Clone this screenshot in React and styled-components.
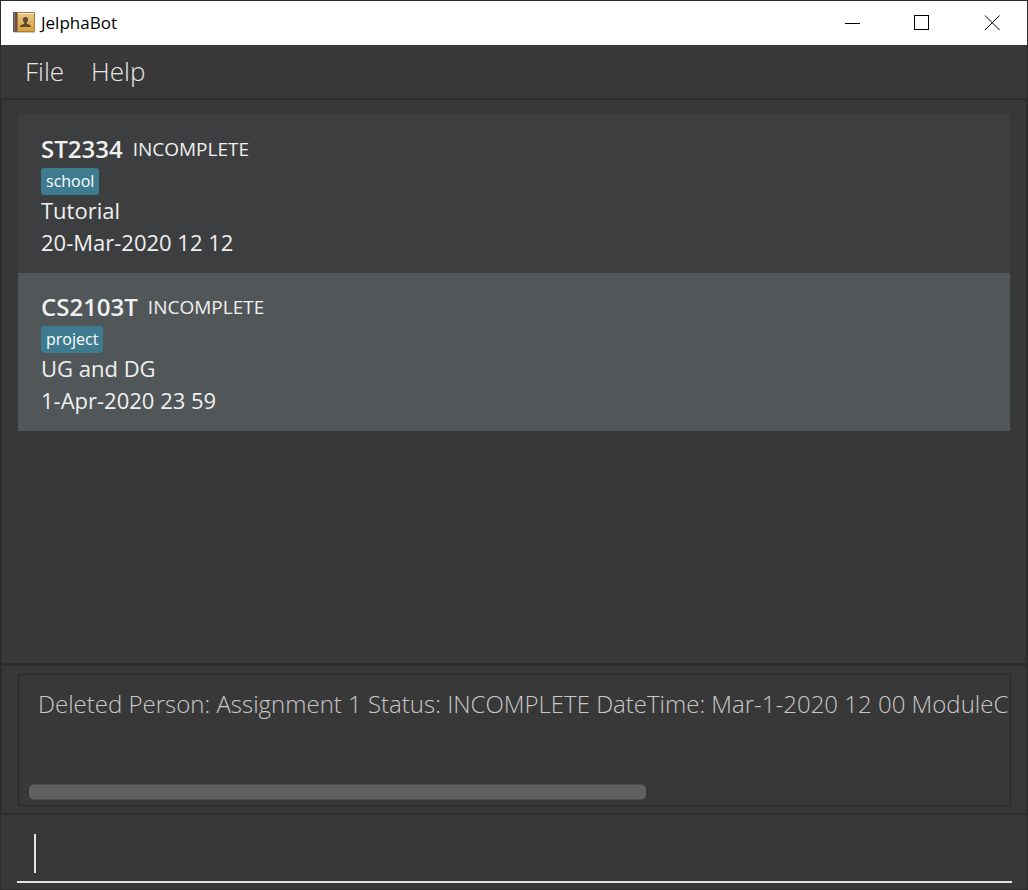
import React from "react";
import styled, { createGlobalStyle } from "styled-components";

const GlobalStyle = createGlobalStyle`
  *, *::before, *::after { box-sizing: border-box; }
  body { margin: 0; background: #383838; }
`;

const Window = styled.div`
  display: flex;
  flex-direction: column;
  min-height: 100vh;
  border: 1px solid #2b2b2b;
  background: #383838;
  color: #f0f0f0;
  font-family: "Open Sans", "Noto Sans", sans-serif;
`;

const TitleBar = styled.header`
  display: flex;
  align-items: center;
  height: 44px;
  padding-left: 12px;
  background: #ffffff;
  color: #000000;
`;

const AppTitle = styled.h1`
  flex: 1;
  margin: 0 0 0 6px;
  font-size: 17px;
  line-height: 24px;
  font-weight: 400;
`;

const WindowButton = styled.button`
  display: flex;
  align-items: center;
  justify-content: center;
  width: 70px;
  height: 44px;
  padding: 0;
  border: 0;
  background: transparent;
  color: #000000;
`;

const MenuBar = styled.nav`
  display: flex;
  align-items: flex-start;
  gap: 27px;
  height: 55px;
  padding: 0 24px;
  border-bottom: 2px solid #2d2d2d;
`;

const MenuButton = styled.button`
  padding: 0;
  border: 0;
  background: transparent;
  color: #e8e8e8;
  font-family: inherit;
  font-size: 26px;
  font-weight: 300;
  line-height: 52px;
`;

const ListPane = styled.main`
  flex: 1;
  padding: 15px 16px;
  border: solid #2d2d2d;
  border-width: 0 1px 3px;
`;

const TaskList = styled.ul`
  margin: 0;
  padding: 0;
  list-style: none;
`;

const TaskCard = styled.li`
  height: 158px;
  padding: 18px 23px;
  background: ${(p) => (p.$selected ? "#515658" : "#3c3e3f")};
`;

const TaskHeading = styled.div`
  display: flex;
  align-items: flex-start;
  gap: 10px;
  height: 35px;
  line-height: 32px;
`;

const ModuleCode = styled.h2`
  margin: 0;
  font-size: 24px;
  font-weight: 600;
`;

const Status = styled.span`
  font-size: 19px;
`;

const TagRow = styled.div`
  display: flex;
  align-items: flex-start;
  height: 26px;
`;

const Tag = styled.span`
  padding: 0 5px;
  border-radius: 3px;
  background: #3e7b91;
  color: #ffffff;
  font-size: 16px;
  font-weight: 500;
  line-height: 27px;
`;

const Detail = styled.p`
  margin: 0;
  font-size: 22px;
  line-height: 32px;
`;

const ResultPane = styled.section`
  padding: 8px 15px 7px 16px;
  border: solid #2f2f2f;
  border-width: 0 1px 2px;
`;

const ResultBox = styled.div`
  display: flex;
  flex-direction: column;
  justify-content: space-between;
  height: 132px;
  padding: 11px 2px 5px 10px;
  border: 1px solid #292929;
`;

const ResultText = styled.output`
  overflow: hidden;
  padding-left: 9px;
  color: #c8c8c8;
  font-size: 24px;
  font-weight: 300;
  line-height: 36px;
  white-space: nowrap;
`;

const ScrollThumb = styled.div`
  width: 63%;
  height: 16px;
  border: solid #4c4c4c;
  border-width: 1px 0;
  border-radius: 5px;
  background: #606060;
`;

const CommandPane = styled.footer`
  padding: 19px 15px 6px 16px;
`;

const CommandRow = styled.div`
  display: flex;
  height: 49px;
  padding-left: 17px;
  border-bottom: 2px solid #e4e4e4;
`;

const Caret = styled.span`
  width: 2px;
  height: 39px;
  background: #e4e4e4;
`;

const CommandInput = styled.input`
  flex: 1;
  min-width: 0;
  height: 39px;
  padding: 0;
  border: 0;
  outline: 0;
  background: transparent;
  color: #ffffff;
  caret-color: transparent;
  font-family: inherit;
  font-size: 24px;
  font-weight: 300;
`;

const AddressBookIcon = () => (
  <svg width="22" height="22" viewBox="0 0 22 22" aria-hidden="true">
    <defs>
      <linearGradient id="cover" x1="0" y1="0" x2="0" y2="1">
        <stop offset="0" stopColor="#e6c384" />
        <stop offset="1" stopColor="#d9a03f" />
      </linearGradient>
    </defs>
    <rect x="1" y="20" width="21" height="1" fill="#c9c9c9" />
    <rect x="0" y="0" width="22" height="20" rx="1" fill="#a87a3c" />
    <rect x="5" y="1" width="16" height="1" fill="#f7ead0" />
    <rect x="5" y="2" width="16" height="17" fill="url(#cover)" />
    <rect x="0" y="0" width="4" height="20" rx="1" fill="#62504a" />
    <rect x="1" y="1" width="1" height="18" fill="#8a7770" />
    <path
      d="M12.500 5c-1.800 0-2.700 1.200-2.600 2.800.1 1.300.6 2 1.300 2.700v1.300c-1.200.6-4.200.9-4.200 3.200h11c0-2.300-3-2.600-4.200-3.200v-1.300c.7-.7 1.200-1.400 1.300-2.700C15.200 6.200 14.300 5 12.500 5z"
      fill="#5d4a2c"
    />
  </svg>
);

const WindowGlyph = ({ children }) => (
  <svg
    width="16"
    height="16"
    viewBox="0 0 16 16"
    fill="none"
    stroke="currentColor"
    strokeWidth="1"
    aria-hidden="true"
  >
    {children}
  </svg>
);

const tasks = [
  { code: "ST2334", tag: "school", name: "Tutorial", due: "20-Mar-2020 12 12" },
  { code: "CS2103T", tag: "project", name: "UG and DG", due: "1-Apr-2020 23 59", selected: true },
];

export default function App() {
  return (
    <>
      <GlobalStyle />
      <Window>
        <TitleBar>
          <AddressBookIcon />
          <AppTitle>JelphaBot</AppTitle>
          <WindowButton type="button" aria-label="Minimize">
            <WindowGlyph>
              <path d="M1 8.500h15" />
            </WindowGlyph>
          </WindowButton>
          <WindowButton type="button" aria-label="Maximize">
            <WindowGlyph>
              <rect x="0.5" y="0.5" width="14" height="14" />
            </WindowGlyph>
          </WindowButton>
          <WindowButton type="button" aria-label="Close">
            <WindowGlyph>
              <path d="M1 0.500l14.500 14.500M15.500 0.500l-14.500 14.500" />
            </WindowGlyph>
          </WindowButton>
        </TitleBar>
        <MenuBar>
          <MenuButton type="button">File</MenuButton>
          <MenuButton type="button">Help</MenuButton>
        </MenuBar>
        <ListPane>
          <TaskList>
            {tasks.map((task) => (
              <TaskCard key={task.code} $selected={task.selected}>
                <TaskHeading>
                  <ModuleCode>{task.code}</ModuleCode>
                  <Status>INCOMPLETE</Status>
                </TaskHeading>
                <TagRow>
                  <Tag>{task.tag}</Tag>
                </TagRow>
                <Detail>{task.name}</Detail>
                <Detail>{task.due}</Detail>
              </TaskCard>
            ))}
          </TaskList>
        </ListPane>
        <ResultPane>
          <ResultBox>
            <ResultText>
              Deleted Person: Assignment 1 Status: INCOMPLETE DateTime: Mar-1-2020 12 00 ModuleC
            </ResultText>
            <ScrollThumb />
          </ResultBox>
        </ResultPane>
        <CommandPane>
          <CommandRow>
            <Caret />
            <CommandInput type="text" aria-label="Command" />
          </CommandRow>
        </CommandPane>
      </Window>
    </>
  );
}
